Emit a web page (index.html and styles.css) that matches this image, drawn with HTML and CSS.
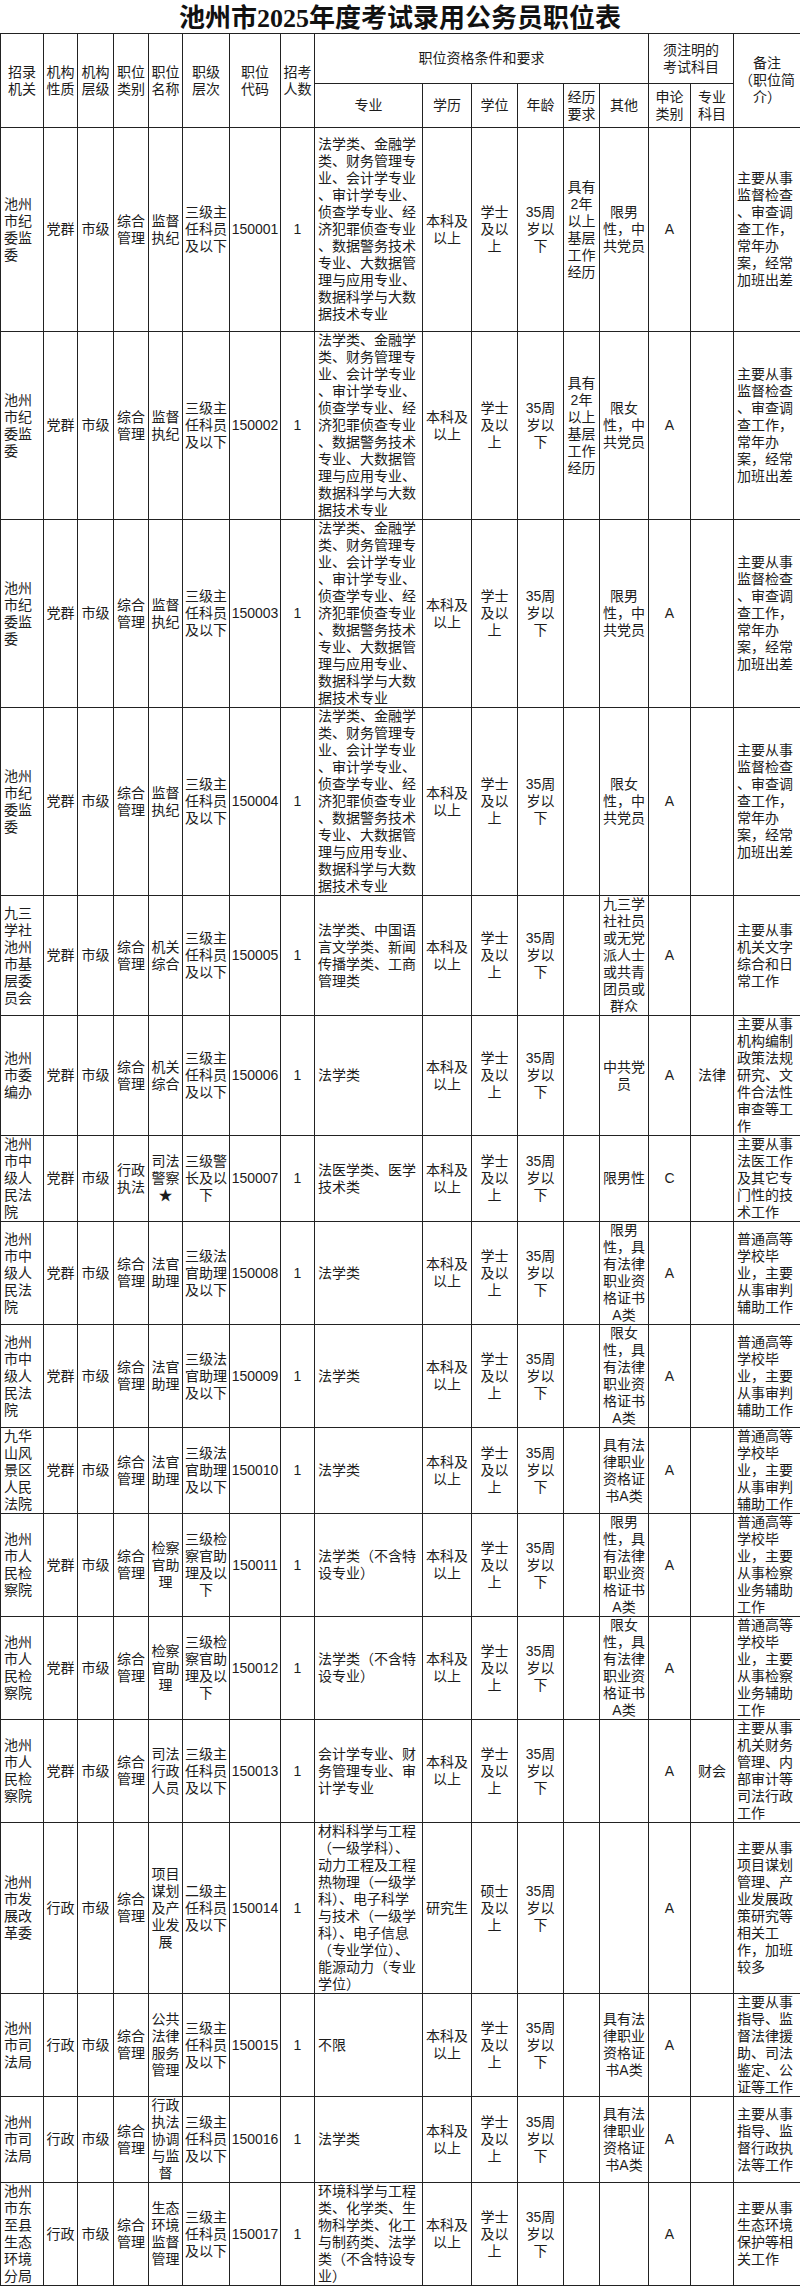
FILE: index.html
```html
<!DOCTYPE html>
<html lang="zh-CN">
<head>
<meta charset="utf-8">
<title>池州市2025年度考试录用公务员职位表</title>
<link rel="stylesheet" href="styles.css">
</head>
<body>
<div class="title">池州市2025年度考试录用公务员职位表</div>
<table class="grid">
<colgroup>
<col class="c43"><col class="c34"><col class="c36"><col class="c35"><col class="c34"><col class="c47"><col class="c51"><col class="c34"><col class="c108"><col class="c49"><col class="c46"><col class="c46"><col class="c36"><col class="c49"><col class="c42"><col class="c43"><col class="c67">
</colgroup>
<thead>
<tr class="hr1">
<th rowspan="2">招录<br>机关</th>
<th rowspan="2">机构<br>性质</th>
<th rowspan="2">机构<br>层级</th>
<th rowspan="2">职位<br>类别</th>
<th rowspan="2">职位<br>名称</th>
<th rowspan="2">职级<br>层次</th>
<th rowspan="2">职位<br>代码</th>
<th rowspan="2">招考<br>人数</th>
<th colspan="6">职位资格条件和要求</th>
<th colspan="2">须注明的<br>考试科目</th>
<th rowspan="2">备注<br>（职位简<br>介）</th>
</tr>
<tr class="hr2">
<th>专业</th>
<th>学历</th>
<th>学位</th>
<th>年龄</th>
<th>经历<br>要求</th>
<th>其他</th>
<th>申论<br>类别</th>
<th>专业<br>科目</th>
</tr>
</thead>
<tbody>
<tr class="tall">
<td class="l">池州<br>市纪<br>委监<br>委</td><td>党群</td><td>市级</td><td>综合<br>管理</td><td>监督<br>执纪</td><td>三级主<br>任科员<br>及以下</td><td>150001</td><td>1</td>
<td class="l">法学类、金融学<br>类、财务管理专<br>业、会计学专业<br>、审计学专业、<br>侦查学专业、经<br>济犯罪侦查专业<br>、数据警务技术<br>专业、大数据管<br>理与应用专业、<br>数据科学与大数<br>据技术专业</td>
<td>本科及<br>以上</td><td>学士<br>及以<br>上</td><td>35周<br>岁以<br>下</td><td>具有<br>2年<br>以上<br>基层<br>工作<br>经历</td><td>限男<br>性，中<br>共党员</td><td>A</td><td></td>
<td class="l">主要从事<br>监督检查<br>、审查调<br>查工作，<br>常年办<br>案，经常<br>加班出差</td>
</tr>
<tr>
<td class="l">池州<br>市纪<br>委监<br>委</td><td>党群</td><td>市级</td><td>综合<br>管理</td><td>监督<br>执纪</td><td>三级主<br>任科员<br>及以下</td><td>150002</td><td>1</td>
<td class="l">法学类、金融学<br>类、财务管理专<br>业、会计学专业<br>、审计学专业、<br>侦查学专业、经<br>济犯罪侦查专业<br>、数据警务技术<br>专业、大数据管<br>理与应用专业、<br>数据科学与大数<br>据技术专业</td>
<td>本科及<br>以上</td><td>学士<br>及以<br>上</td><td>35周<br>岁以<br>下</td><td>具有<br>2年<br>以上<br>基层<br>工作<br>经历</td><td>限女<br>性，中<br>共党员</td><td>A</td><td></td>
<td class="l">主要从事<br>监督检查<br>、审查调<br>查工作，<br>常年办<br>案，经常<br>加班出差</td>
</tr>
<tr>
<td class="l">池州<br>市纪<br>委监<br>委</td><td>党群</td><td>市级</td><td>综合<br>管理</td><td>监督<br>执纪</td><td>三级主<br>任科员<br>及以下</td><td>150003</td><td>1</td>
<td class="l">法学类、金融学<br>类、财务管理专<br>业、会计学专业<br>、审计学专业、<br>侦查学专业、经<br>济犯罪侦查专业<br>、数据警务技术<br>专业、大数据管<br>理与应用专业、<br>数据科学与大数<br>据技术专业</td>
<td>本科及<br>以上</td><td>学士<br>及以<br>上</td><td>35周<br>岁以<br>下</td><td></td><td>限男<br>性，中<br>共党员</td><td>A</td><td></td>
<td class="l">主要从事<br>监督检查<br>、审查调<br>查工作，<br>常年办<br>案，经常<br>加班出差</td>
</tr>
<tr>
<td class="l">池州<br>市纪<br>委监<br>委</td><td>党群</td><td>市级</td><td>综合<br>管理</td><td>监督<br>执纪</td><td>三级主<br>任科员<br>及以下</td><td>150004</td><td>1</td>
<td class="l">法学类、金融学<br>类、财务管理专<br>业、会计学专业<br>、审计学专业、<br>侦查学专业、经<br>济犯罪侦查专业<br>、数据警务技术<br>专业、大数据管<br>理与应用专业、<br>数据科学与大数<br>据技术专业</td>
<td>本科及<br>以上</td><td>学士<br>及以<br>上</td><td>35周<br>岁以<br>下</td><td></td><td>限女<br>性，中<br>共党员</td><td>A</td><td></td>
<td class="l">主要从事<br>监督检查<br>、审查调<br>查工作，<br>常年办<br>案，经常<br>加班出差</td>
</tr>
<tr>
<td class="l">九三<br>学社<br>池州<br>市基<br>层委<br>员会</td><td>党群</td><td>市级</td><td>综合<br>管理</td><td>机关<br>综合</td><td>三级主<br>任科员<br>及以下</td><td>150005</td><td>1</td>
<td class="l">法学类、中国语<br>言文学类、新闻<br>传播学类、工商<br>管理类</td>
<td>本科及<br>以上</td><td>学士<br>及以<br>上</td><td>35周<br>岁以<br>下</td><td></td><td>九三学<br>社社员<br>或无党<br>派人士<br>或共青<br>团员或<br>群众</td><td>A</td><td></td>
<td class="l">主要从事<br>机关文字<br>综合和日<br>常工作</td>
</tr>
<tr>
<td class="l">池州<br>市委<br>编办</td><td>党群</td><td>市级</td><td>综合<br>管理</td><td>机关<br>综合</td><td>三级主<br>任科员<br>及以下</td><td>150006</td><td>1</td>
<td class="l">法学类</td>
<td>本科及<br>以上</td><td>学士<br>及以<br>上</td><td>35周<br>岁以<br>下</td><td></td><td>中共党<br>员</td><td>A</td><td>法律</td>
<td class="l">主要从事<br>机构编制<br>政策法规<br>研究、文<br>件合法性<br>审查等工<br>作</td>
</tr>
<tr>
<td class="l">池州<br>市中<br>级人<br>民法<br>院</td><td>党群</td><td>市级</td><td>行政<br>执法</td><td>司法<br>警察<br>★</td><td>三级警<br>长及以<br>下</td><td>150007</td><td>1</td>
<td class="l">法医学类、医学<br>技术类</td>
<td>本科及<br>以上</td><td>学士<br>及以<br>上</td><td>35周<br>岁以<br>下</td><td></td><td>限男性</td><td>C</td><td></td>
<td class="l">主要从事<br>法医工作<br>及其它专<br>门性的技<br>术工作</td>
</tr>
<tr>
<td class="l">池州<br>市中<br>级人<br>民法<br>院</td><td>党群</td><td>市级</td><td>综合<br>管理</td><td>法官<br>助理</td><td>三级法<br>官助理<br>及以下</td><td>150008</td><td>1</td>
<td class="l">法学类</td>
<td>本科及<br>以上</td><td>学士<br>及以<br>上</td><td>35周<br>岁以<br>下</td><td></td><td>限男<br>性，具<br>有法律<br>职业资<br>格证书<br>A类</td><td>A</td><td></td>
<td class="l">普通高等<br>学校毕<br>业，主要<br>从事审判<br>辅助工作</td>
</tr>
<tr>
<td class="l">池州<br>市中<br>级人<br>民法<br>院</td><td>党群</td><td>市级</td><td>综合<br>管理</td><td>法官<br>助理</td><td>三级法<br>官助理<br>及以下</td><td>150009</td><td>1</td>
<td class="l">法学类</td>
<td>本科及<br>以上</td><td>学士<br>及以<br>上</td><td>35周<br>岁以<br>下</td><td></td><td>限女<br>性，具<br>有法律<br>职业资<br>格证书<br>A类</td><td>A</td><td></td>
<td class="l">普通高等<br>学校毕<br>业，主要<br>从事审判<br>辅助工作</td>
</tr>
<tr>
<td class="l">九华<br>山风<br>景区<br>人民<br>法院</td><td>党群</td><td>市级</td><td>综合<br>管理</td><td>法官<br>助理</td><td>三级法<br>官助理<br>及以下</td><td>150010</td><td>1</td>
<td class="l">法学类</td>
<td>本科及<br>以上</td><td>学士<br>及以<br>上</td><td>35周<br>岁以<br>下</td><td></td><td>具有法<br>律职业<br>资格证<br>书A类</td><td>A</td><td></td>
<td class="l">普通高等<br>学校毕<br>业，主要<br>从事审判<br>辅助工作</td>
</tr>
<tr>
<td class="l">池州<br>市人<br>民检<br>察院</td><td>党群</td><td>市级</td><td>综合<br>管理</td><td>检察<br>官助<br>理</td><td>三级检<br>察官助<br>理及以<br>下</td><td>150011</td><td>1</td>
<td class="l">法学类（不含特<br>设专业）</td>
<td>本科及<br>以上</td><td>学士<br>及以<br>上</td><td>35周<br>岁以<br>下</td><td></td><td>限男<br>性，具<br>有法律<br>职业资<br>格证书<br>A类</td><td>A</td><td></td>
<td class="l">普通高等<br>学校毕<br>业，主要<br>从事检察<br>业务辅助<br>工作</td>
</tr>
<tr>
<td class="l">池州<br>市人<br>民检<br>察院</td><td>党群</td><td>市级</td><td>综合<br>管理</td><td>检察<br>官助<br>理</td><td>三级检<br>察官助<br>理及以<br>下</td><td>150012</td><td>1</td>
<td class="l">法学类（不含特<br>设专业）</td>
<td>本科及<br>以上</td><td>学士<br>及以<br>上</td><td>35周<br>岁以<br>下</td><td></td><td>限女<br>性，具<br>有法律<br>职业资<br>格证书<br>A类</td><td>A</td><td></td>
<td class="l">普通高等<br>学校毕<br>业，主要<br>从事检察<br>业务辅助<br>工作</td>
</tr>
<tr>
<td class="l">池州<br>市人<br>民检<br>察院</td><td>党群</td><td>市级</td><td>综合<br>管理</td><td>司法<br>行政<br>人员</td><td>三级主<br>任科员<br>及以下</td><td>150013</td><td>1</td>
<td class="l">会计学专业、财<br>务管理专业、审<br>计学专业</td>
<td>本科及<br>以上</td><td>学士<br>及以<br>上</td><td>35周<br>岁以<br>下</td><td></td><td></td><td>A</td><td>财会</td>
<td class="l">主要从事<br>机关财务<br>管理、内<br>部审计等<br>司法行政<br>工作</td>
</tr>
<tr>
<td class="l">池州<br>市发<br>展改<br>革委</td><td>行政</td><td>市级</td><td>综合<br>管理</td><td>项目<br>谋划<br>及产<br>业发<br>展</td><td>二级主<br>任科员<br>及以下</td><td>150014</td><td>1</td>
<td class="l">材料科学与工程<br>（一级学科）、<br>动力工程及工程<br>热物理（一级学<br>科）、电子科学<br>与技术（一级学<br>科）、电子信息<br>（专业学位）、<br>能源动力（专业<br>学位）</td>
<td>研究生</td><td>硕士<br>及以<br>上</td><td>35周<br>岁以<br>下</td><td></td><td></td><td>A</td><td></td>
<td class="l">主要从事<br>项目谋划<br>管理、产<br>业发展政<br>策研究等<br>相关工<br>作，加班<br>较多</td>
</tr>
<tr>
<td class="l">池州<br>市司<br>法局</td><td>行政</td><td>市级</td><td>综合<br>管理</td><td>公共<br>法律<br>服务<br>管理</td><td>三级主<br>任科员<br>及以下</td><td>150015</td><td>1</td>
<td class="l">不限</td>
<td>本科及<br>以上</td><td>学士<br>及以<br>上</td><td>35周<br>岁以<br>下</td><td></td><td>具有法<br>律职业<br>资格证<br>书A类</td><td>A</td><td></td>
<td class="l">主要从事<br>指导、监<br>督法律援<br>助、司法<br>鉴定、公<br>证等工作</td>
</tr>
<tr>
<td class="l">池州<br>市司<br>法局</td><td>行政</td><td>市级</td><td>综合<br>管理</td><td>行政<br>执法<br>协调<br>与监<br>督</td><td>三级主<br>任科员<br>及以下</td><td>150016</td><td>1</td>
<td class="l">法学类</td>
<td>本科及<br>以上</td><td>学士<br>及以<br>上</td><td>35周<br>岁以<br>下</td><td></td><td>具有法<br>律职业<br>资格证<br>书A类</td><td>A</td><td></td>
<td class="l">主要从事<br>指导、监<br>督行政执<br>法等工作</td>
</tr>
<tr>
<td class="l">池州<br>市东<br>至县<br>生态<br>环境<br>分局</td><td>行政</td><td>市级</td><td>综合<br>管理</td><td>生态<br>环境<br>监督<br>管理</td><td>三级主<br>任科员<br>及以下</td><td>150017</td><td>1</td>
<td class="l">环境科学与工程<br>类、化学类、生<br>物科学类、化工<br>与制药类、法学<br>类（不含特设专<br>业）</td>
<td>本科及<br>以上</td><td>学士<br>及以<br>上</td><td>35周<br>岁以<br>下</td><td></td><td></td><td>A</td><td></td>
<td class="l">主要从事<br>生态环境<br>保护等相<br>关工作</td>
</tr>
</tbody>
</table>
</body>
</html>
```

FILE: styles.css
```css
html, body {
  margin: 0;
  padding: 0;
  background: #ffffff;
}

body {
  width: 800px;
  color: #1c1c1c;
  font-family: "Liberation Sans", "Noto Sans CJK SC", sans-serif;
  font-size: 14px;
}

.title {
  height: 33px;
  line-height: 37px;
  text-align: center;
  font-family: "Liberation Serif", "Noto Sans CJK SC", serif;
  font-weight: bold;
  font-size: 26px;
  color: #111;
  overflow: hidden;
}

.grid {
  width: 800px;
  border-collapse: collapse;
  table-layout: fixed;
}

.c34 { width: 34px; }
.c35 { width: 35px; }
.c36 { width: 36px; }
.c42 { width: 42px; }
.c43 { width: 43px; }
.c46 { width: 46px; }
.c47 { width: 47px; }
.c49 { width: 49px; }
.c51 { width: 51px; }
.c67 { width: 67px; }
.c108 { width: 108px; }

.grid th,
.grid td {
  border: 1px solid #222;
  padding: 0 1px;
  line-height: 17px;
  text-align: center;
  vertical-align: middle;
  white-space: nowrap;
  overflow: hidden;
  font-weight: normal;
}

.grid td.l {
  text-align: left;
  padding-left: 3px;
  padding-right: 0;
}

.hr1 { height: 50px; }
.hr2 { height: 44px; }
.tall { height: 204px; }
```
